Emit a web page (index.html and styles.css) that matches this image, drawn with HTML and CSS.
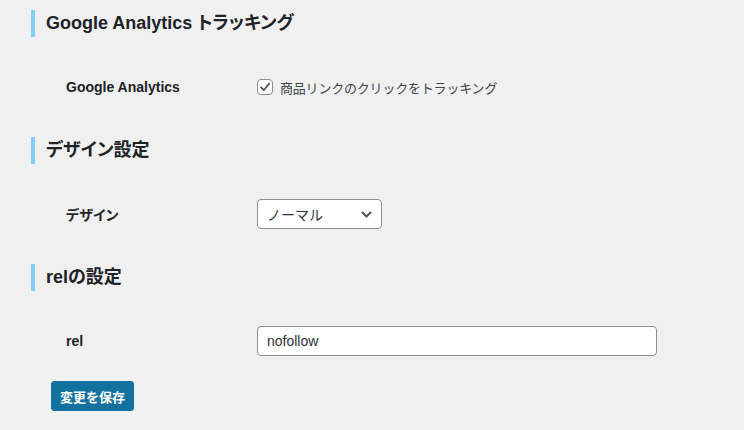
FILE: index.html
```html
<!DOCTYPE html>
<html lang="ja">
<head>
<meta charset="utf-8">
<title>設定</title>
<link rel="stylesheet" href="styles.css">
</head>
<body>
<div class="page">
  <h2 class="sec-title">Google Analytics トラッキング</h2>
  <div class="row">
    <div class="label">Google Analytics</div>
    <div class="field">
      <label class="check">
        <span class="box"><svg width="12" height="12" viewBox="0 0 12 12"><path d="M2 6.3 L4.8 9.2 L10.2 2.6" fill="none" stroke="#50575e" stroke-width="1.8" stroke-linecap="round" stroke-linejoin="round"/></svg></span>
        <span class="check-text">商品リンクのクリックをトラッキング</span>
      </label>
    </div>
  </div>

  <h2 class="sec-title">デザイン設定</h2>
  <div class="row">
    <div class="label">デザイン</div>
    <div class="field">
      <div class="select">
        <span>ノーマル</span>
        <svg class="chev" width="11" height="7" viewBox="0 0 11 7"><path d="M1 1 L5.5 5.5 L10 1" fill="none" stroke="#50575e" stroke-width="2"/></svg>
      </div>
    </div>
  </div>

  <h2 class="sec-title">relの設定</h2>
  <div class="row">
    <div class="label">rel</div>
    <div class="field">
      <div class="input">nofollow</div>
    </div>
  </div>

  <div class="actions">
    <button class="btn">変更を保存</button>
  </div>
</div>
</body>
</html>
```
FILE: styles.css
```css
html, body {
  margin: 0;
  padding: 0;
  background: #f0f0f1;
}
body {
  font-family: "Liberation Sans", "Noto Sans CJK JP", sans-serif;
  color: #1d2327;
  font-size: 14px;
}
.page {
  padding: 10px 0 0 31px;
}
.sec-title {
  margin: 0;
  height: 27px;
  line-height: 27px;
  border-left: 4px solid #82cff9;
  padding-left: 11px;
  font-size: 18px;
  font-weight: 600;
  color: #1d2327;
  font-feature-settings: "palt";
}
.row {
  display: grid;
  grid-template-columns: 191px 1fr;
  align-items: center;
  height: 30px;
  margin: 35px 0 35px 35px;
}
.label {
  font-weight: 700;
  font-size: 14px;
  color: #1d2327;
  font-feature-settings: "palt";
}
.check {
  display: flex;
  align-items: center;
  gap: 7px;
}
.box {
  width: 14px;
  height: 14px;
  border: 1px solid #8c8f94;
  border-radius: 4px;
  background: #fff;
  display: flex;
  align-items: center;
  justify-content: center;
}
.check-text {
  font-size: 13px;
  letter-spacing: -0.2px;
  color: #3c434a;
}
.select {
  width: 105px;
  height: 28px;
  border: 1px solid #8c8f94;
  border-radius: 4px;
  background: #fff;
  padding: 0 9px 0 9px;
  display: flex;
  align-items: center;
  justify-content: space-between;
  font-size: 14px;
  color: #2c3338;
}
.chev {
  display: block;
}
.input {
  width: 389px;
  height: 28px;
  line-height: 28px;
  border: 1px solid #8c8f94;
  border-radius: 4px;
  background: #fff;
  padding: 0 0 0 9px;
  font-size: 14px;
  color: #2c3338;
}
.actions {
  margin: -10px 0 0 20px;
}
.btn {
  font-family: "Liberation Sans", "Noto Sans CJK JP", sans-serif;
  height: 30px;
  padding: 0 8px;
  border: 1px solid #13719e;
  border-radius: 3px;
  background: #13719e;
  color: #fff;
  font-size: 13px;
  font-weight: 600;
  cursor: pointer;
}
```
